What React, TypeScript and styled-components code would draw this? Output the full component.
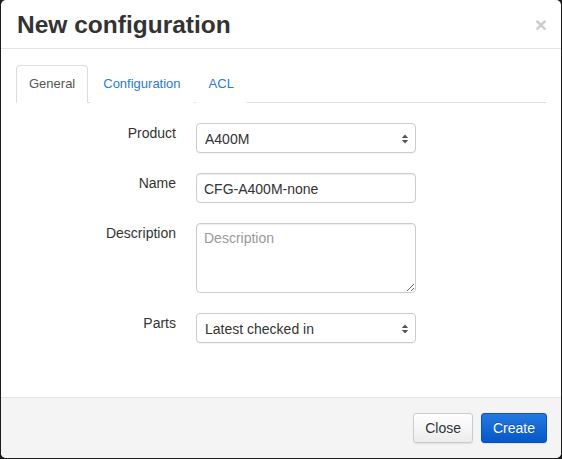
import React from "react";
import styled, { createGlobalStyle } from "styled-components";

const Global = createGlobalStyle`
  html, body { margin: 0; padding: 0; background: #1c1c1c; }
  body { font-family: "Liberation Sans", Arial, sans-serif; color: #333; }
  * { box-sizing: border-box; }
`;

const Backdrop = styled.div`
  width: 562px;
  height: 459px;
  padding: 0 1px 1px 1px;
  background: #1c1c1c;
  display: flex;
`;

const Modal = styled.div`
  flex: 1;
  background: #fff;
  border-radius: 5px;
  display: flex;
  flex-direction: column;
  overflow: hidden;
`;

const Header = styled.div`
  height: 49px;
  border-bottom: 1px solid #e5e5e5;
  padding: 0 15px 0 16px;
  display: flex;
  align-items: center;
  justify-content: space-between;
`;

const Title = styled.h3`
  margin: 0;
  font-size: 24.5px;
  font-weight: bold;
  color: #333;
  line-height: 28px;
  padding-top: 2px;
`;

const CloseX = styled.button`
  border: 0;
  background: none;
  padding: 0;
  margin-right: -1px;
  font-family: "Liberation Sans", Arial, sans-serif;
  font-size: 21px;
  font-weight: bold;
  line-height: 1;
  color: #000;
  opacity: 0.2;
  cursor: pointer;
`;

const Body = styled.div`
  flex: 1;
  padding: 16px 15px 0 15px;
`;

const Tabs = styled.ul`
  list-style: none;
  margin: 0;
  padding: 0;
  display: flex;
  border-bottom: 1px solid #ddd;
`;

const Tab = styled.li<{ $active?: boolean }>`
  margin-right: 2px;
  margin-bottom: -1px;
  padding: 10px 12px 11px 12px;
  font-size: 13px;
  line-height: 15px;
  border: 1px solid ${(p) => (p.$active ? "#ddd" : "transparent")};
  border-bottom-color: ${(p) => (p.$active ? "#fff" : "transparent")};
  border-radius: 4px 4px 0 0;
  background: #fff;
  color: ${(p) => (p.$active ? "#555" : "#2a7bd4")};
  cursor: pointer;
`;

const Form = styled.div`
  margin-top: 20px;
  display: grid;
  grid-template-columns: 160px 220px;
  column-gap: 20px;
  row-gap: 20px;
`;

const Label = styled.label`
  text-align: right;
  font-size: 14px;
  line-height: 20px;
  padding-top: 0;
  color: #333;
`;

const fieldBase = `
  width: 220px;
  border: 1px solid #ccc;
  border-radius: 4px;
  background: #fff;
  font-family: "Liberation Sans", Arial, sans-serif;
  font-size: 14px;
  color: #333;
  box-shadow: inset 0 1px 1px rgba(0,0,0,0.075);
  outline: none;
`;

const SelectWrap = styled.div`
  position: relative;
  width: 220px;
  height: 30px;
`;

const Select = styled.select`
  ${fieldBase}
  height: 30px;
  padding: 2px 24px 0 8px;
  appearance: none;
  -webkit-appearance: none;
  box-shadow: 0 1px 1px rgba(0,0,0,0.05);
`;

const Arrows = styled.svg`
  position: absolute;
  right: 7px;
  top: 11px;
  pointer-events: none;
`;

const Input = styled.input`
  ${fieldBase}
  height: 30px;
  padding: 2px 7px 0;
`;

const TextArea = styled.textarea`
  ${fieldBase}
  height: 70px;
  padding: 6px 7px;
  resize: vertical;
  display: block;
  &::placeholder { color: #999; }
`;

const Footer = styled.div`
  height: 61px;
  border-top: 1px solid #e5e5e5;
  background: #f4f4f4;
  padding: 15px 14px 0 0;
  display: flex;
  justify-content: flex-end;
  align-items: flex-start;
  gap: 8px;
`;

const Button = styled.button<{ $primary?: boolean }>`
  height: 30px;
  padding: 0 11px;
  font-family: "Liberation Sans", Arial, sans-serif;
  font-size: 14px;
  border-radius: 3px;
  cursor: pointer;
  border: 1px solid ${(p) => (p.$primary ? "#0a52b8" : "#ccc")};
  color: ${(p) => (p.$primary ? "#fff" : "#333")};
  background: ${(p) =>
    p.$primary
      ? "linear-gradient(#2479e0, #0657c8)"
      : "linear-gradient(#fff, #ececec)"};
  box-shadow: 0 1px 1px rgba(0,0,0,0.08);
  text-shadow: ${(p) => (p.$primary ? "0 -1px 0 rgba(0,0,0,0.2)" : "none")};
`;

const SelectArrows = () => (
  <Arrows width="8" height="10" viewBox="0 0 8 10">
    <path d="M4 0.5 L7.2 4 L0.8 4 Z" fill="#555" />
    <path d="M4 9.5 L7.2 6 L0.8 6 Z" fill="#555" />
  </Arrows>
);

export default function App() {
  return (
    <>
      <Global />
      <Backdrop>
        <Modal>
          <Header>
            <Title>New configuration</Title>
            <CloseX>×</CloseX>
          </Header>
          <Body>
            <Tabs>
              <Tab $active>General</Tab>
              <Tab>Configuration</Tab>
              <Tab>ACL</Tab>
            </Tabs>
            <Form>
              <Label>Product</Label>
              <SelectWrap>
                <Select defaultValue="A400M">
                  <option>A400M</option>
                </Select>
                <SelectArrows />
              </SelectWrap>
              <Label>Name</Label>
              <Input defaultValue="CFG-A400M-none" />
              <Label>Description</Label>
              <TextArea placeholder="Description" />
              <Label>Parts</Label>
              <SelectWrap>
                <Select defaultValue="Latest checked in">
                  <option>Latest checked in</option>
                </Select>
                <SelectArrows />
              </SelectWrap>
            </Form>
          </Body>
          <Footer>
            <Button>Close</Button>
            <Button $primary>Create</Button>
          </Footer>
        </Modal>
      </Backdrop>
    </>
  );
}
